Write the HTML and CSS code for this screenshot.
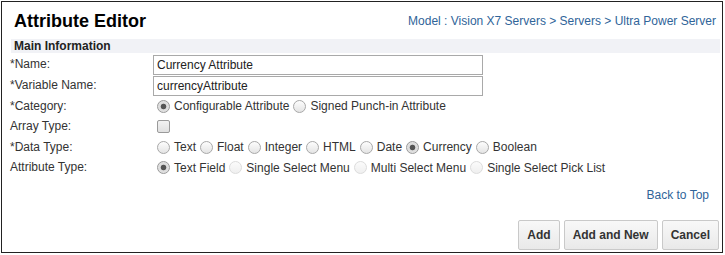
FILE: index.html
```html
<!DOCTYPE html>
<html>
<head lang="en">
    <meta charset="UTF-8">
    <title>Attribute Editor</title>
    <link rel="stylesheet" href="styles.css">
</head>
<body>
<div class="page">
    <div class="head">
        <h1>Attribute Editor</h1>
        <a class="crumb" href="#">Model : Vision X7 Servers &gt; Servers &gt; Ultra Power Server</a>
    </div>
    <div class="bar">Main Information</div>
    <div class="form">
        <div class="lbl">*Name:</div>
        <div class="val"><input class="txt" type="text" value="Currency Attribute"></div>

        <div class="lbl">*Variable Name:</div>
        <div class="val"><input class="txt" type="text" value="currencyAttribute"></div>

        <div class="lbl">*Category:</div>
        <div class="val">
            <label class="opt"><input type="radio" name="cat" checked>Configurable Attribute</label>
            <label class="opt"><input type="radio" name="cat">Signed Punch-in Attribute</label>
        </div>

        <div class="lbl">Array Type:</div>
        <div class="val"><input class="chk" type="checkbox"></div>

        <div class="lbl">*Data Type:</div>
        <div class="val">
            <label class="opt"><input type="radio" name="dt">Text</label>
            <label class="opt"><input type="radio" name="dt">Float</label>
            <label class="opt"><input type="radio" name="dt">Integer</label>
            <label class="opt"><input type="radio" name="dt">HTML</label>
            <label class="opt"><input type="radio" name="dt">Date</label>
            <label class="opt"><input type="radio" name="dt" checked>Currency</label>
            <label class="opt"><input type="radio" name="dt">Boolean</label>
        </div>

        <div class="lbl">Attribute Type:</div>
        <div class="val">
            <label class="opt"><input type="radio" name="at" checked>Text Field</label>
            <label class="opt"><input type="radio" name="at" disabled>Single Select Menu</label>
            <label class="opt"><input type="radio" name="at" disabled>Multi Select Menu</label>
            <label class="opt"><input type="radio" name="at" disabled>Single Select Pick List</label>
        </div>
    </div>
    <div class="top"><a href="#">Back to Top</a></div>
    <div class="btns">
        <button>Add</button>
        <button>Add and New</button>
        <button>Cancel</button>
    </div>
</div>
</body>
</html>
```

FILE: styles.css
```css
*{margin: 0; padding: 0; box-sizing: border-box;}
body {
    font-family: "Liberation Sans", Arial, sans-serif;
    font-size: 12px;
    color: #333;
    background: #fff;
}
a {color: #2f6499; text-decoration: none;}
.page {
    margin: 1px;
    width: 722px;
    height: 252px;
    border: 1px solid #222;
    padding: 0 2px 0 8px;
}
.head {
    height: 37px;
    display: flex;
    justify-content: space-between;
    align-items: center;
    padding: 0 4px 0 4px;
}
.head h1 {
    font-size: 18px;
    font-weight: bold;
    color: #000;
    padding-top: 2px;
}
.crumb {padding-top: 1px;}
.bar {
    height: 14px;
    line-height: 14px;
    background-color: #f1f2f6;
    font-weight: bold;
    padding-left: 3px;
    margin-left: 1px;
    color: #222;
}
.form {
    margin-top: 1px;
    display: grid;
    grid-template-columns: 143px 1fr;
    grid-template-rows: 21px 21px 20px 21px 20px 21px;
}
.lbl {
    display: flex;
    align-items: center;
    padding-bottom: 1px;
}
.val {
    display: flex;
    align-items: center;
}
.txt {
    width: 330px;
    height: 20px;
    border: 1px solid #a9a9a9;
    font-family: inherit;
    font-size: 12px;
    color: #222;
    padding: 0 3px;
    outline: none;
}
.opt {
    display: inline-flex;
    align-items: center;
    margin-right: 1px;
}
.opt input {
    appearance: none;
    width: 13px;
    height: 13px;
    margin: 0 4px 0 3px;
    border: 1px solid #a8a8a8;
    border-radius: 50%;
    background: linear-gradient(#fdfdfd, #e4e4e4);
}
.opt:first-child input {margin-left: 4px;}
.opt input:checked {
    background: radial-gradient(circle, #555 0, #555 2.4px, #dcdcdc 3.2px, #e8e8e8 100%);
    border-color: #9a9a9a;
}
.opt input:disabled {
    border-color: #dcdcdc;
    background: linear-gradient(#fbfbfb, #efefef);
}
.chk {
    appearance: none;
    width: 13px;
    height: 13px;
    margin-left: 4px;
    border: 1px solid #9a9a9a;
    border-radius: 2px;
    background: linear-gradient(#f2f2f2, #e0e0e0);
}
.top {
    margin-top: 10px;
    height: 14px;
    line-height: 14px;
    text-align: right;
    padding-right: 11px;
}
.btns {
    margin-top: 18px;
    display: flex;
    justify-content: flex-end;
    gap: 4px;
    padding-right: 1px;
}
.btns button {
    height: 30px;
    padding: 0 8px;
    border: 1px solid #c9c9c9;
    border-radius: 2px;
    background: linear-gradient(#f8f8f8, #e9e9e9);
    font-family: inherit;
    font-size: 12px;
    font-weight: bold;
    color: #333;
}
```
